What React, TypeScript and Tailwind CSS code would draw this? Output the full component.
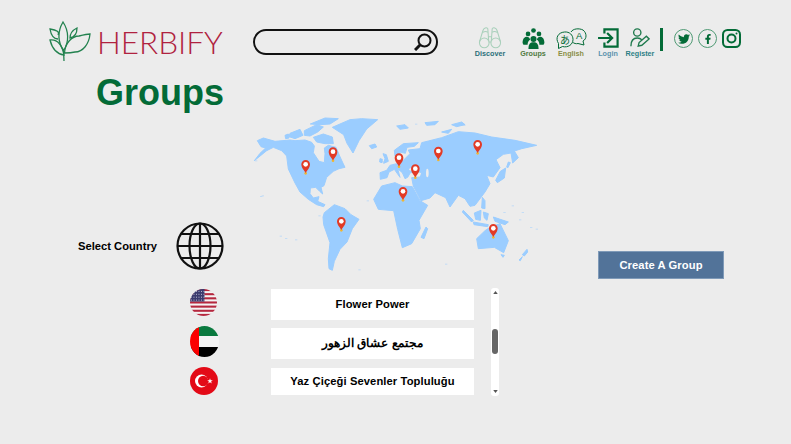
import React from "react";
import { FaFacebookF, FaTwitter } from "react-icons/fa";

const GREEN = "#036b37";

// pin positions are in the map's own 900x495 space
const pins = [
  [182, 165],
  [264, 127],
  [462, 145],
  [511, 178],
  [580, 125],
  [698, 105],
  [474, 246],
  [289, 336],
  [745, 357],
];

const land = [
  // north america
  "M37,86 L55,78 L90,88 L135,84 L150,86 L180,84 L200,91 L208,102 L205,122 L222,148 L238,152 L240,125 L238,108 L250,100 L273,106 L284,132 L295,156 L300,166 L282,170 L265,178 L245,196 L237,221 L228,226 L233,246 L224,238 L212,226 L196,228 L195,245 L205,258 L222,254 L218,268 L240,278 L236,284 L215,278 L190,262 L165,240 L150,213 L130,171 L125,132 L110,116 L85,106 L65,116 L28,146 L45,124 L62,108 L48,104 Z",
  // arctic islands
  "M135,64 L165,52 L174,70 L150,80 L132,74 Z M178,56 L215,38 L235,45 L218,60 L195,72 L178,70 Z M205,76 L235,66 L262,75 L265,95 L240,95 L215,90 Z M196,36 L240,18 L280,20 L255,36 L226,38 Z M120,70 L130,66 L132,78 L122,80 Z",
  // greenland
  "M262,46 L315,23 L350,20 L398,23 L365,51 L342,86 L324,123 L306,94 L296,68 Z",
  // iceland, uk, ireland, svalbard and other north islands
  "M373,101 L390,96 L395,105 L380,110 Z M414,125 L424,128 L430,148 L416,154 L420,140 Z M405,140 L412,142 L411,152 L404,150 Z M455,42 L480,38 L490,48 L465,52 Z M540,32 L580,28 L570,38 L545,40 Z M620,38 L650,30 L660,38 L635,44 Z M590,60 L620,52 L610,64 Z",
  // south america
  "M238,302 L268,278 L300,290 L318,308 L342,322 L322,350 L306,390 L285,412 L268,448 L262,475 L252,470 L250,440 L255,392 L236,338 L234,315 Z",
  // africa
  "M386,262 L410,222 L450,212 L472,222 L502,224 L525,266 L548,280 L522,325 L526,350 L500,395 L472,407 L458,352 L446,296 L400,292 Z",
  // madagascar
  "M543,345 L548,350 L537,380 L528,376 Z",
  // scandinavia
  "M448,115 L475,95 L520,92 L508,103 L486,106 L481,124 L466,120 L460,134 L450,132 Z",
  // eurasia
  "M406,202 L405,182 L425,175 L435,160 L455,155 L475,145 L495,125 L490,114 L525,110 L530,92 L550,87 L590,77 L640,59 L690,63 L740,75 L810,85 L875,100 L830,110 L808,117 L820,137 L803,153 L798,123 L775,127 L753,143 L765,167 L745,195 L725,190 L735,215 L720,240 L690,280 L675,283 L660,260 L640,250 L615,285 L602,257 L570,242 L555,258 L528,266 L505,222 L500,197 L526,195 L530,182 L516,178 L496,182 L488,196 L480,200 L472,182 L458,170 L465,196 L448,172 L432,180 L426,197 Z",
  // islands in south east asia, japan
  "M655,295 L685,325 L680,330 L652,300 Z M685,330 L730,338 L728,344 L687,338 Z M688,303 L708,295 L706,325 L692,322 Z M715,300 L730,305 L726,325 L718,318 Z M745,315 L790,330 L780,338 L750,328 Z M712,256 L720,266 L720,290 L710,288 Z M766,178 L782,168 L778,198 L757,212 L752,205 Z M790,150 L796,152 L788,168 L785,165 Z",
  // australia
  "M695,380 L720,356 L735,346 L765,335 L790,386 L776,422 L748,406 L700,410 Z M768,428 L778,430 L774,436 Z",
  // new zealand
  "M846,412 L848,420 L838,432 L832,428 Z M832,434 L826,446 L822,444 Z",
];

// tiny far away islands, these are washed out in the picture
const specks = [
  [104, 371], [50, 250], [600, 455], [220, 310], [365, 265], [800, 280], [830, 300], [855, 345], [872, 350], [822, 322],
  [775, 300], [340, 472], [150, 382], [120, 378], [460, 45], [510, 35], [655, 38], [30, 145], [45, 252], [410, 148],
];

function WorldMap() {
  return (
    <svg viewBox="0 0 900 495" className="w-[300px] h-[165px] shrink-0">
      {land.map((d, i) => (
        <path key={i} d={d} fill="#9bcdff" stroke="#9bcdff" strokeWidth="3" strokeLinejoin="round" />
      ))}
      {specks.map(([x, y]) => (
        <rect key={`${x}-${y}`} x={x} y={y} width="7" height="3" fill="#9bcdff" opacity="0.5" />
      ))}
      <ellipse cx="508" cy="172" rx="16" ry="5" fill="#ececec" />
      <ellipse cx="547" cy="183" rx="4" ry="13" fill="#ececec" />
      {pins.map(([x, y]) => (
        <g key={x}>
          <circle cx={x} cy={y + 19} r="4" fill="#f2b632" />
          <path
            d={`M${x},${y + 18} C${x - 4},${y + 10} ${x - 13},${y + 3} ${x - 13},${y - 8} A13,13 0 1 1 ${x + 13},${y - 8} C${x + 13},${y + 3} ${x + 4},${y + 10} ${x},${y + 18} Z`}
            fill="#e23a26"
          />
          <circle cx={x} cy={y - 8} r="7" fill="#fff" />
        </g>
      ))}
    </svg>
  );
}

function Logo() {
  return (
    <svg viewBox="0 0 51 48" className="w-[51px] h-[48px]" fill="none" stroke="#23824f" strokeWidth="1.3">
      <path d="M19 43 L18.5 32 C13 25 12 14 18 4 C24 13 24 24 19 32" />
      <path d="M13 17 C15 14 12 12 5 11 C6 17 9 21 13 21" />
      <path d="M25 20 C25 15 28 12 32 10 C32 15 30 19 25 20 Z" />
      <path d="M5 22 C13 21 17 27 19 37 C12 36 7 30 5 22 Z" />
      <path d="M19.5 35 C20 25 27 18 34 18 C38 17 42 16 45 16 C44 26 38 34 30 34 C26 35 22 35 19.5 35 Z" />
    </svg>
  );
}

function Discover() {
  return (
    <svg viewBox="0 0 26 25" className="w-[24px] h-[22px]" fill="none" stroke="#a9d0bb" strokeWidth="1.2">
      <circle cx="6.5" cy="18" r="5.5" />
      <circle cx="19.5" cy="18" r="5.5" />
      <path d="M1 17 L5 4 C6 1 9 0 10.5 2 L11.5 16 M25 17 L21 4 C20 1 17 0 15.5 2 L14.5 16 M11.5 11 H14.5 M11.5 17 H14.5" />
      <path d="M5 6 C7 5 9 5 10.5 6 M21 6 C19 5 17 5 15.5 6" />
    </svg>
  );
}

function GroupsIcon() {
  return (
    <svg viewBox="0 0 26 25" className="w-[23px] h-[21px]" fill={GREEN}>
      <circle cx="13" cy="3" r="2.8" />
      <circle cx="6.5" cy="7" r="2.8" />
      <circle cx="19.5" cy="7" r="2.8" />
      <circle cx="13" cy="13" r="3.6" />
      <path d="M0 18 C0 12 3 10.5 5 10.5 C7 10.5 8.5 12 9 14 C7 15 6 17 6 20 L1 20 Z" />
      <path d="M26 18 C26 12 23 10.5 21 10.5 C19 10.5 17.5 12 17 14 C19 15 20 17 20 20 L25 20 Z" />
      <path d="M7 25 C7 19 9 17 13 17 C17 17 19 19 19 25 Z" />
    </svg>
  );
}

function EnglishIcon() {
  return (
    <svg viewBox="0 0 31 21" className="w-[31px] h-[21px]" fill="none" stroke={GREEN} strokeWidth="1">
      <path d="M15 4 C17 0.5 23 0 27 2 C31 5 31 11 27 13 L28 17 L22 15.5 C20 16 18 15.5 16.5 14" />
      <path d="M2.5 15.5 C-1 10 2 4.5 8.5 4 C13.5 3.5 17 7 17 11.5 C17 16.5 12 20 6.5 18.5 L2.5 20.5 Z" fill="#ececec" />
      <text x="4" y="15.5" fontSize="10" fill={GREEN} stroke="none" fontFamily="'Noto Sans CJK JP', sans-serif">
        あ
      </text>
      <text x="20" y="11" fontSize="9.5" fill={GREEN} stroke="none" fontFamily="'Liberation Sans', sans-serif">
        A
      </text>
    </svg>
  );
}

function LoginIcon() {
  return (
    <svg viewBox="0 0 23 22" className="w-[21px] h-[20px]" fill="none" stroke={GREEN} strokeWidth="2.4">
      <path d="M7 6 V1.5 H21.5 V20.5 H7 V16" />
      <path d="M0 11 H15 M10 5.5 L15.5 11 L10 16.5" />
    </svg>
  );
}

function RegisterIcon() {
  return (
    <svg viewBox="0 0 22 22" className="w-[20px] h-[20px]" fill="none" stroke="#1f7a4d" strokeWidth="1.5">
      <circle cx="8" cy="5" r="4" />
      <path d="M1 20 C1 14 4 11 8 11 C10 11 12 12 13 13" />
      <path d="M9 20 L10 16 L18 9 L21 12 L13 19 Z" />
    </svg>
  );
}

function NavItem({ label, color, width, children }: { label: string; color: string; width: string; children: React.ReactNode }) {
  return (
    <div className={`flex flex-col items-center ${width}`}>
      <div className="h-[22px] flex items-center justify-center">{children}</div>
      <span className="text-[7.2px] leading-[9px] font-bold whitespace-nowrap" style={{ color }}>
        {label}
      </span>
    </div>
  );
}

function Globe() {
  return (
    <svg viewBox="0 0 48 48" className="w-[48px] h-[48px]" fill="none" stroke="#111" strokeWidth="2.2">
      <circle cx="24" cy="24" r="22.5" />
      <ellipse cx="24" cy="24" rx="10.5" ry="22.5" />
      <path d="M24 1.5 V46.5 M1.5 24 H46.5 M5 12 H43 M5 36 H43" />
    </svg>
  );
}

function UsFlag() {
  const stripes = [0, 2, 4, 6, 8, 10, 12];
  return (
    <svg viewBox="0 0 28 28" className="w-[27px] h-[27px]">
      <defs>
        <clipPath id="us">
          <circle cx="14" cy="14" r="14" />
        </clipPath>
      </defs>
      <g clipPath="url(#us)">
        <rect width="28" height="28" fill="#f4f4f4" />
        {stripes.map((s) => (
          <rect key={s} y={s * 2.15} width="28" height="2.15" fill="#b5283f" />
        ))}
        <rect width="15" height="13" fill="#3c3b6e" />
        <path d="M1 2.5 H15 M1 5.5 H15 M1 8.5 H15 M1 11.5 H15" stroke="#c9c9dd" strokeWidth="1" strokeDasharray="1 1.6" />
      </g>
    </svg>
  );
}

function UaeFlag() {
  return (
    <svg viewBox="0 0 29 31" className="w-[29px] h-[31px]">
      <defs>
        <clipPath id="uae">
          <ellipse cx="14.5" cy="15.5" rx="14.5" ry="15.5" />
        </clipPath>
      </defs>
      <g clipPath="url(#uae)">
        <rect width="29" height="10" fill="#0a7a3f" />
        <rect y="10" width="29" height="11" fill="#f4f4f4" />
        <rect y="21" width="29" height="10" fill="#000" />
        <rect width="9" height="31" fill="#fb0000" />
      </g>
    </svg>
  );
}

function TurkeyFlag() {
  return (
    <svg viewBox="0 0 28 28" className="w-[28px] h-[28px]">
      <circle cx="14" cy="14" r="14" fill="#e30a17" />
      <circle cx="11.5" cy="14" r="6.5" fill="#fff" />
      <circle cx="13.2" cy="14" r="5.2" fill="#e30a17" />
      <path d="M20 11.2 L20.7 13.2 L22.8 13.2 L21.1 14.4 L21.8 16.4 L20 15.2 L18.2 16.4 L18.9 14.4 L17.2 13.2 L19.3 13.2 Z" fill="#fff" />
    </svg>
  );
}

export default function App() {
  return (
    <div
      className="w-[791px] h-[444px] overflow-hidden bg-[#ececec] text-black"
      style={{ fontFamily: "'Liberation Sans', Arial, sans-serif" }}
    >
      {/* header */}
      <header className="flex items-start h-[73px] pl-[45px] pt-[18px]">
        <div className="flex items-start w-[208px]">
          <Logo />
          <span
            className="ml-[1px] mt-[6px] text-[31.5px] leading-[36px] font-light text-[#b02240] whitespace-nowrap"
            style={{ fontFamily: "Lato, sans-serif" }}
          >
            HERBIFY
          </span>
        </div>
        <div className="mt-[11px] flex items-center justify-end w-[185px] h-[26px] border-2 border-[#111] rounded-full pr-[4px]">
          <svg viewBox="0 0 18 18" className="w-[18px] h-[18px]" fill="none" stroke="#111" strokeWidth="2">
            <circle cx="10.5" cy="7.5" r="6" />
            <path d="M6 12 L1 17" strokeWidth="3" />
          </svg>
        </div>
        <nav className="ml-[36px] mt-[9px] flex items-start">
          <NavItem label="Discover" color="#2a6f7a" width="w-[32px]">
            <Discover />
          </NavItem>
          <div className="ml-[13px]">
            <NavItem label="Groups" color="#4f7a3f" width="w-[28px]">
              <GroupsIcon />
            </NavItem>
          </div>
          <div className="ml-[8px]">
            <NavItem label="English" color="#8a8f45" width="w-[32px]">
              <EnglishIcon />
            </NavItem>
          </div>
          <div className="ml-[9px]">
            <NavItem label="Login" color="#5b93ad" width="w-[24px]">
              <LoginIcon />
            </NavItem>
          </div>
          <div className="ml-[5px]">
            <NavItem label="Register" color="#2d7f86" width="w-[30px]">
              <RegisterIcon />
            </NavItem>
          </div>
          <div className="ml-[5px] mt-[1px] w-[3px] h-[23px] bg-[#036b37]" />
          <div className="ml-[11px] mt-[2px] flex items-center gap-[5px] text-[#036b37]">
            <div className="w-[19px] h-[19px] rounded-full border border-[#4f9a74] flex items-center justify-center">
              <FaTwitter size={12} />
            </div>
            <div className="w-[19px] h-[19px] rounded-full border border-[#4f9a74] flex items-center justify-center">
              <FaFacebookF size={10} />
            </div>
            <svg viewBox="0 0 19 19" className="w-[19px] h-[19px]" fill="none" stroke="#036b37" strokeWidth="2">
              <rect x="1" y="1" width="17" height="17" rx="4.5" />
              <circle cx="9.5" cy="9.5" r="4" />
              <circle cx="14.5" cy="4.5" r="1" fill="#036b37" stroke="none" />
            </svg>
          </div>
        </nav>
      </header>

      <h1 className="pl-[96px] h-[39px] text-[36px] leading-[40px] font-bold text-[#036b37]">Groups</h1>

      {/* map row */}
      <section className="flex items-start h-[167px] pl-[78px]">
        <div className="self-end mb-[9px] flex items-center">
          <span className="w-[98px] text-[11.2px] font-bold whitespace-nowrap">Select Country</span>
          <Globe />
        </div>
        <div className="ml-[21px]">
          <WorldMap />
        </div>
        <button className="self-end ml-[53px] w-[126px] h-[28px] bg-[#527399] border border-[#7f9ab8] text-white text-[11.2px] font-bold tracking-[0.1px]">
          Create A Group
        </button>
      </section>

      {/* groups list */}
      <section className="mt-[10px] flex items-start pl-[190px]">
        <div className="w-[29px] flex flex-col">
          <UsFlag />
          <div className="mt-[10px]">
            <UaeFlag />
          </div>
          <div className="mt-[10px]">
            <TurkeyFlag />
          </div>
        </div>
        <div className="ml-[52px] w-[203px] h-[106px] overflow-hidden flex flex-col gap-2 text-[11.2px] font-bold text-center tracking-[0.1px]">
          <div className="shrink-0 h-[31px] bg-white flex items-center justify-center">Flower Power</div>
          <div className="shrink-0 h-[31px] bg-white flex items-center justify-center tracking-normal text-[11.8px]" dir="rtl">
            مجتمع عشاق الزهور
          </div>
          <div className="shrink-0 h-[27px] mt-[1px] bg-white flex items-center justify-center">Yaz Çiçeği Sevenler Topluluğu</div>
        </div>
        <div className="ml-[17px] -mt-[1px] w-[8px] h-[108px] bg-white rounded-[3px] flex flex-col items-center justify-between py-[3px] relative">
          <svg viewBox="0 0 6 4" className="w-[5px] h-[3px]" fill="#555">
            <path d="M3 0 L6 4 H0 Z" />
          </svg>
          <div className="absolute top-[41px] left-[1px] w-[6px] h-[25px] rounded-[3px] bg-[#666]" />
          <svg viewBox="0 0 6 4" className="w-[5px] h-[3px]" fill="#555">
            <path d="M0 0 H6 L3 4 Z" />
          </svg>
        </div>
      </section>
    </div>
  );
}
